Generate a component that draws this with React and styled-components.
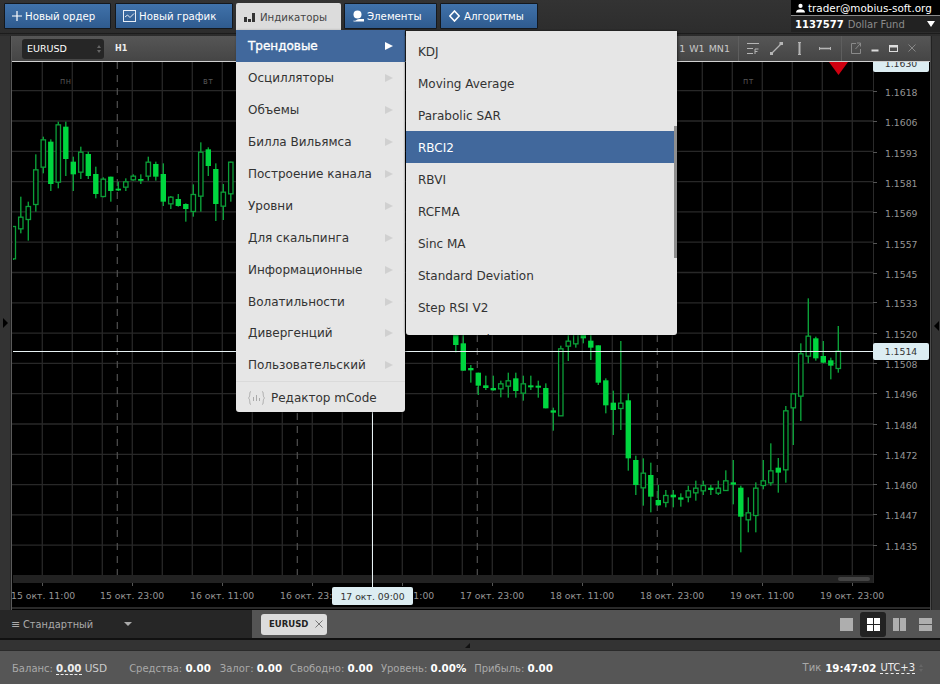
import React from 'react';
import styled, { createGlobalStyle } from 'styled-components';

const FONT = '"DejaVu Sans", Verdana, sans-serif';

const Global = createGlobalStyle`
  html, body { margin: 0; padding: 0; background: #2f2f2f; }
  * { box-sizing: border-box; }
`;

const Page = styled.div`
  width: 940px; height: 684px; overflow: hidden;
  display: flex; flex-direction: column;
  background: #2f2f2f; font-family: ${FONT};
`;

/* ---------- top bar ---------- */
const TopBar = styled.header`
  height: 36px; flex: none; display: flex; justify-content: space-between;
  padding: 3px 0 0 4px;
  background: linear-gradient(#333, #2c2c2c);
  position: relative;
  &::after { content: ''; position: absolute; left: 0; right: 0; top: 33px; height: 1px; background: #1c1c1c; }
`;
const Toolbar = styled.nav`
  display: flex; height: 26px; gap: 3px;
`;
const ToolButton = styled.div`
  position: relative; display: flex; align-items: center; gap: ${p => p.$gap}px;
  width: ${p => p.$w}px; height: 26px; padding-left: ${p => p.$pad}px;
  margin-right: ${p => p.$after || 0}px;
  border: 1px solid #14181d; border-radius: 1px;
  background: linear-gradient(#4072aa, #2f5b8f);
  color: #fff; font-size: 10.2px; white-space: nowrap;
`;
const ActiveButton = styled(ToolButton)`
  border: none; border-radius: 2px 2px 0 0; height: 28px;
  background: #dcdcdc; color: #444; z-index: 5;
`;
const UserBox = styled.div`
  width: 149px; height: 32px; margin-top: -3px; background: #222; flex: none;
  position: relative; z-index: 3; color: #fff;
`;
const UserMail = styled.div`
  height: 16px; background: #000; border-bottom: 1px solid #8a8a8a;
  display: flex; align-items: center; gap: 3px; padding-left: 5px;
  font-size: 10.4px; white-space: nowrap;
`;
const UserAccount = styled.div`
  height: 16px; display: flex; align-items: center; gap: 4px; padding: 0 5px 0 4px;
  font-size: 10px; white-space: nowrap;
`;
const AccountId = styled.span`font-weight: 600;`;
const AccountName = styled.span`color: #8b8b8b; flex: 1;`;
const Caret = styled.span`
  width: 0; height: 0; border-left: 4px solid transparent; border-right: 4px solid transparent;
  border-top: 6px solid #fff;
`;

/* ---------- dropdown ---------- */
const Menu = styled.div`
  position: absolute; left: 0; top: 27px; width: 169px; height: 382px;
  background: #e6e6e6; border-radius: 0 0 3px 3px;
  box-shadow: 1px 1px 3px rgba(0,0,0,.5);
  font-size: 12px; color: #333;
`;
const MenuItem = styled.div`
  height: 31.9px; display: flex; align-items: center; justify-content: space-between;
  padding: 1px 12px 0; white-space: nowrap;
  background: ${p => p.$on ? '#41689c' : 'transparent'};
  color: ${p => p.$on ? '#fff' : '#333'};
  ${p => p.$on && '-webkit-text-stroke: 0.35px #fff; padding-top: 0;'}
`;
const Arrow = styled.span`
  width: 0; height: 0; border-top: 4px solid transparent; border-bottom: 4px solid transparent;
  border-left: 8px solid ${p => p.$on ? '#fff' : '#d0d0d0'};
`;
const MenuFooter = styled.div`
  height: 32px; display: flex; align-items: center; gap: 6px; padding: 1px 0 0 12px;
  border-top: 1px solid #dadada; white-space: nowrap;
`;
const SubMenu = styled.div`
  position: absolute; left: 170px; top: 1px; width: 271px; height: 304px;
  overflow: hidden; background: #e6e6e6; border-radius: 0 0 3px 3px;
  box-shadow: -1px 0 2px rgba(0,0,0,.55), 1px 1px 3px rgba(0,0,0,.5);
  padding-top: 4px;
`;
const SubItem = styled.div`
  height: 32px; display: flex; align-items: center; padding: 2px 0 0 12px;
  background: ${p => p.$on ? '#41689c' : 'transparent'};
  color: ${p => p.$on ? '#fff' : '#333'};
`;
const SubScroll = styled.div`
  position: absolute; right: 0; top: 95px; width: 3px; height: 132px; background: #8e8e8e;
`;

/* ---------- workspace ---------- */
const Workspace = styled.main`
  flex: none; height: 574px; display: flex;
`;
const Rail = styled.div`
  width: ${p => p.$w}px; flex: none; background: #333;
  display: flex; align-items: center; justify-content: center; padding-top: ${p => p.$top}px;
  border-${p => p.$side}: 1px solid #222;
`;
const RailArrow = styled.span`
  width: 0; height: 0; border-top: 5px solid transparent; border-bottom: 5px solid transparent;
  ${p => p.$dir === 'r' ? 'border-left: 5px solid #000;' : 'border-right: 5px solid #000;'}
`;
const ChartWindow = styled.section`
  flex: 1; min-width: 0; display: flex; flex-direction: column;
  border-left: 1px solid #5a5a5a; border-right: 1px solid #4a4a4a; background: #000;
`;
const ChartHeader = styled.div`
  height: 26px; flex: none; display: flex; align-items: center;
  background: linear-gradient(#565656, #454545);
  border-bottom: 1px solid #d0d0d0;
  padding-left: 10px; color: #ddd; font-size: 10px;
`;
const SymbolSelect = styled.div`
  width: 82px; height: 20px; border-radius: 3px; background: #262626; color: #fff;
  display: flex; align-items: center; justify-content: space-between;
  padding: 0 3px 0 5px; font-size: 9.5px;
`;
const Spinner = styled.span`
  display: flex; flex-direction: column; gap: 2px;
  &::before, &::after { content: ''; width: 0; height: 0; border-left: 2.5px solid transparent; border-right: 2.5px solid transparent; }
  &::before { border-bottom: 3px solid #666; }
  &::after { border-top: 3px solid #666; }
`;
const Period = styled.span`margin-left: 11px; font-weight: 700; font-size: 8px; color: #eee;`;
const HeaderRight = styled.div`
  margin-left: auto; display: flex; align-items: center; height: 25px;
`;
const Periods = styled.span`
  display: flex; gap: 4px; font-size: 9.5px; color: #c8c8c8; padding-right: 8px;
`;
const IconGroup = styled.div`
  display: flex; align-items: center; height: 25px; gap: ${p => p.$gap}px;
  padding: 0 ${p => p.$pr}px 0 ${p => p.$pl}px;
  border-left: 1px solid #5e5e5e;
`;
const ChartBody = styled.div`
  flex: 1; position: relative; overflow: hidden;
`;
const ChartSvg = styled.svg`
  display: block; width: 919px; height: 547px;
`;
const PriceTag = styled.div`
  position: absolute; left: 861px; top: ${p => p.$top}px; width: 56px; height: 17px;
  background: #dcedf2; border-radius: 2px; color: #333; font-size: 9.3px;
  display: flex; align-items: center; justify-content: center;
`;
const TimeTag = styled.div`
  position: absolute; left: 320px; top: 525px; width: 81px; height: 18px;
  background: #dcedf2; border-radius: 2px; color: #333; font-size: 9.3px;
  display: flex; align-items: center; justify-content: center; white-space: nowrap;
`;

/* ---------- tabs ---------- */
const TabBar = styled.div`
  height: 30px; flex: none; display: flex; background: #545454; border-bottom: 2px solid #111;
`;
const LayoutPicker = styled.div`
  width: 252px; flex: none; background: #262626; color: #aaa; font-size: 9.8px;
  display: flex; align-items: center; padding-left: 11px; gap: 4px;
`;
const PickerName = styled.span`width: 97px;`;
const PickerMark = styled.span`font-size: 11px; width: 8px;`;
const DownCaret = styled(Caret)`border-top-color: #aaa; border-top-width: 4px;`;
const TabStrip = styled.div`
  flex: 1; display: flex; align-items: center; padding-left: 9px;
`;
const Tab = styled.div`
  width: 66px; height: 21px; border-radius: 3px; background: #dcdcdc; color: #222;
  display: flex; align-items: center; gap: 7px; padding-left: 8px;
  font-size: 8.5px; font-weight: 700;
`;
const ViewButtons = styled.div`
  display: flex; align-items: center; padding-right: 1px;
`;
const ViewButton = styled.div`
  width: 26.4px; height: 25px; border-radius: 3px;
  display: flex; align-items: center; justify-content: center;
  background: ${p => p.$on ? '#222' : 'transparent'};
`;

const Strip = styled.div`
  height: 10px; flex: none; background: #333; position: relative;
  &::after { content: ''; position: absolute; left: 465px; top: 3px; border-left: 5px solid transparent; border-bottom: 5px solid #111; }
`;

/* ---------- status ---------- */
const StatusBar = styled.footer`
  flex: 1; background: #565656; border-top: 1px solid #2a2a2a;
  display: flex; align-items: center; padding-left: 12px;
  color: #a9a9a9; font-size: 10px; white-space: nowrap;
`;
const Stat = styled.span`margin-right: ${p => p.$mr}px;`;
const Val = styled.b`color: #fff; font-weight: 700; font-size: 10.3px;`;
const Dashed = styled.span`border-bottom: 1px dashed #eee; color: #eee; font-weight: ${p => p.$b ? 700 : 400}; font-size: ${p => p.$b ? 10.3 : 10}px;`;
const Unit = styled.span`color: #ccc; font-size: 10.5px;`;
const StatusRight = styled.div`
  margin-left: auto; display: flex; align-items: center; gap: 4px; padding-right: 17px; font-size: 10px;
`;

/* ---------- chart data: [index, wickTop, bodyTop, bodyBottom, wickBottom, filled] in 3x crop px ---------- */
const A = [
  [0,498,498,595,600,0],[1,410,470,505,520,0],[2,425,438,477,542,0],[3,283,328,432,455,0],[4,230,238,320,340,0],
  [5,238,245,372,393,1],[6,185,193,365,385,0],[7,185,200,297,348,1],[8,290,305,343,393,1],[9,260,275,335,357,0],
  [10,275,282,348,357,1],[11,320,342,402,415,1],[12,352,356,408,412,0],[13,350,350,393,425,1],[14,365,386,390,393,1],
  [15,355,364,380,393,0],[16,343,347,358,362,0],[17,343,357,360,372,1],[18,290,305,347,362,0],[19,305,312,350,362,1],
  [20,310,342,425,438,1],[21,408,410,430,447,0],[22,402,417,438,440,1],[23,430,432,447,485,1],[24,373,402,453,470,0],
  [25,247,275,407,455,0],[26,262,268,318,348,1],[27,310,327,432,483,1],[28,372,395,437,480,0],[29,305,305,400,425,0],
];
const B = [
  [59,0,0,45,67,1],[60,0,40,122,122,1],[61,105,114,121,158,1],[62,128,128,167,195,1],[63,137,166,174,180,1],
  [64,137,174,181,182,1],[65,152,160,175,202,0],[66,128,151,167,203,0],[67,128,145,183,203,1],[68,137,160,188,212,0],
  [69,137,166,172,180,1],[70,152,167,173,203,1],[71,160,174,235,235,1],[72,233,241,248,302,1],[73,47,55,256,257,0],
  [74,0,32,47,93,0],[75,0,0,40,53,0],[76,0,0,25,40,1],[77,0,32,53,90,1],[78,46,46,158,165,1],
  [79,145,151,226,250,1],[80,182,218,240,315,1],[81,33,218,234,300,0],[82,190,211,385,422,1],[83,377,390,465,495,1],
  [84,385,428,472,527,0],[85,398,435,500,547,1],[86,465,510,526,527,1],[87,480,495,516,532,0],[88,480,494,502,532,1],
];
const C = [
  [89,640,652,659,680,1],[90,617,631,650,667,0],[91,602,623,637,662,0],[92,602,615,631,645,0],[93,615,623,630,645,1],
  [94,602,623,638,645,0],[95,571,601,630,632,0],[96,540,607,614,673,1],[97,617,623,710,817,1],[98,652,697,718,757,0],
  [99,607,623,705,757,0],[100,540,601,615,628,0],[101,490,571,607,617,0],[102,534,563,578,638,1],[103,378,391,568,608,0],
  [104,340,340,382,495,0],[105,190,220,347,423,0],[106,55,167,227,250,0],[107,170,175,235,242,1],[108,183,228,248,250,1],
  [109,233,241,257,298,1],[110,138,212,264,278,0],
];
const toReal = (rows, y0) => rows.map(([i, a, b, c, d, f]) => ({ i, wt: y0 + a / 3, bt: y0 + b / 3, bb: y0 + c / 3, wb: y0 + d / 3, f }));
const CANDLES = [...toReal(A, 60), ...toReal(B, 330), ...toReal(C, 280)];

const PRICES = [['1.1618',92],['1.1606',122.7],['1.1593',153],['1.1581',183],['1.1569',213],['1.1557',244],['1.1545',274],['1.1533',303.5],['1.1520',334],['1.1508',364],['1.1496',394],['1.1484',425],['1.1472',455],['1.1460',485],['1.1447',515],['1.1435',546]];
const TIMES = [['15 окт. 11:00',11],['15 окт. 23:00',100],['16 окт. 11:00',190],['16 окт. 23:00',280],['17 окт. 11:00',370],['17 окт. 23:00',460],['18 окт. 11:00',550],['18 окт. 23:00',640],['19 окт. 11:00',730],['19 окт. 23:00',820]];
const VX = Array.from({ length: 28 }, (_, n) => 42 + 30 * n);
const HY = Array.from({ length: 16 }, (_, n) => 90.7 + 30.3 * n);
const DASHED = [117, 297, 477, 657];

const Chart = () => (
  <ChartSvg viewBox="12 62 919 547">
    <defs><clipPath id="plot"><rect x="13" y="62" width="860" height="513" /></clipPath></defs>
    <g stroke="#282828" strokeWidth="1.3">
      {VX.map(x => <line key={x} x1={x + .3} x2={x + .3} y1="62" y2="575" />)}
      {HY.map(y => <line key={y} x1="12" x2="873" y1={y} y2={y} />)}
    </g>
    <g stroke="#505050" strokeWidth="1.2" strokeDasharray="7 6">
      {DASHED.map(x => <line key={x} x1={x + .3} x2={x + .3} y1="62" y2="575" />)}
    </g>
    <g fontFamily={FONT} fontSize="8" fill="#555" letterSpacing=".5">
      <text x="60" y="84">пн</text><text x="203" y="84">вт</text><text x="743" y="84">пт</text>
    </g>
    <g clipPath="url(#plot)">
      {CANDLES.map(c => {
        const x = 13.3 + 7.5 * c.i;
        return (
          <g key={c.i}>
            <rect x={x - .7} y={c.wt} width="1.4" height={c.wb - c.wt} fill="#0b9f38" />
            {c.f
              ? <rect x={x - 2.7} y={c.bt} width="5.4" height={Math.max(c.bb - c.bt, 1.8)} fill="#00d63f" />
              : <rect x={x - 2.2} y={c.bt + .5} width="4.4" height={c.bb - c.bt} fill="#000" stroke="#0b9f38" strokeWidth="1.3" />}
          </g>
        );
      })}
    </g>
    <rect x="13" y="575" width="860" height="8" fill="#222" />
    <rect x="838" y="577" width="32" height="4" rx="2" fill="#444" />
    <line x1="873.5" x2="873.5" y1="62" y2="583" stroke="#2a2a2a" />
    <polygon points="829,62 848,62 838.5,75" fill="#cf0010" />
    <line x1="13" x2="873" y1="351.5" y2="351.5" stroke="#e8f2f4" />
    <line x1="372.5" x2="372.5" y1="62" y2="590" stroke="#e8f2f4" />
    <g stroke="#555">
      {PRICES.map(([, y]) => <line key={y} x1="873" x2="877" y1={Math.round(y - 1.5) + .5} y2={Math.round(y - 1.5) + .5} />)}
      {[42, 132, 222, 312, 402, 492, 582, 672, 762, 852].map(x => <line key={x} x1={x + .5} x2={x + .5} y1="583" y2="586" />)}
    </g>
    <g fontFamily={FONT} fontSize="9.3" fill="#959595">
      {PRICES.map(([p, y]) => <text key={p} x="885" y={y + 3.5}>{p}</text>)}
    </g>
    <g fontFamily={FONT} fontSize="9.3" fill="#959595">
      {TIMES.map(([t, x]) => <text key={t} x={x} y="599">{t}</text>)}
    </g>
    <line x1="12" x2="931" y1="608" y2="608" stroke="#555" />
  </ChartSvg>
);

/* ---------- icons ---------- */
const PlusIcon = () => <svg width="10" height="10" viewBox="0 0 10 10"><path d="M5 0v10M0 5h10" stroke="#fff" strokeWidth="1.2" /></svg>;
const GraphIcon = () => <svg width="13" height="12" viewBox="0 0 13 12" fill="none" stroke="#e8eef6"><rect x=".5" y=".5" width="12" height="11" /><path d="M2 7l2.500-2 2.500 2.500L11 3.500" /></svg>;
const BarsIcon = () => <svg width="11" height="9" viewBox="0 0 11 9" fill="#333"><rect y="4" width="3" height="5" /><rect x="4" y="6" width="3" height="3" /><rect x="8" width="3" height="9" /></svg>;
const ElementsIcon = () => <svg width="11" height="12" viewBox="0 0 11 12" fill="#fff"><circle cx="4.500" cy="4.500" r="4" /><path d="M.5 10.500c3 1 3-1.500 6-1.500H11v2.500H.5z" /></svg>;
const DiamondIcon = () => <svg width="11" height="12" viewBox="0 0 11 12" fill="none" stroke="#fff" strokeWidth="1.6"><path d="M5.500 1l4.700 5-4.700 5-4.700-5z" /></svg>;
const UserIcon = () => <svg width="9" height="10" viewBox="0 0 11 11" fill="#fff"><circle cx="5.500" cy="3" r="2.600" /><path d="M0 11c0-3 2.500-4 5.500-4S11 8 11 11z" /></svg>;
const CodeIcon = () => <svg width="17" height="14" viewBox="0 0 17 14" fill="none" stroke="#aaa"><path d="M3 .5C1 .5 2.500 6 .5 7c2 1 .5 6.500 2.500 6.500M14 .5c2 0 .5 5.500 2.500 6.500-2 1-.5 6.500-2.500 6.500" /><path d="M5.500 6v4M8.500 4v6M11.500 7v3" /></svg>;
const HeaderIcon = ({ w = 13, children }) => <svg width={w} height="13" viewBox={`0 0 ${w} 13`} fill="none" stroke="#b5b5b5">{children}</svg>;
const CloseGlyph = ({ c = '#999', s = 8 }) => <svg width={s} height={s} viewBox="0 0 8 8" fill="none" stroke={c}><path d="M.5.5l7 7M7.500.5l-7 7" /></svg>;
const ViewIcon = ({ kind, on }) => {
  const f = on ? '#fff' : '#aeaeae';
  const rects = { one: [[0, 0, 13, 13]], four: [[0, 0, 6, 6], [7, 0, 6, 6], [0, 7, 6, 6], [7, 7, 6, 6]], cols: [[0, 0, 6, 13], [7, 0, 6, 13]], rows: [[0, 0, 13, 6], [0, 7, 13, 6]] }[kind];
  return <svg width="13" height="13" viewBox="0 0 13 13" fill={f}>{rects.map(r => <rect key={r.join()} x={r[0]} y={r[1]} width={r[2]} height={r[3]} />)}</svg>;
};

const GROUPS = ['Осцилляторы', 'Объемы', 'Билла Вильямса', 'Построение канала', 'Уровни', 'Для скальпинга', 'Информационные', 'Волатильности', 'Дивергенций', 'Пользовательский'];
const SUB = ['KDJ', 'Moving Average', 'Parabolic SAR', 'RBCI2', 'RBVI', 'RCFMA', 'Sinc MA', 'Standard Deviation', 'Step RSI V2', 'Super Trend'];

export default function App() {
  return (
    <Page>
      <Global />
      <TopBar>
        <Toolbar>
          <ToolButton $w={107} $pad={7} $gap={3} $after={1}><PlusIcon /> Новый ордер</ToolButton>
          <ToolButton $w={118} $pad={7} $gap={3}><GraphIcon /> Новый график</ToolButton>
          <ActiveButton $w={105} $pad={8} $gap={5}>
            <BarsIcon /> Индикаторы
            <Menu>
              <MenuItem $on>Трендовые<Arrow $on /></MenuItem>
              {GROUPS.map(g => <MenuItem key={g}>{g}<Arrow /></MenuItem>)}
              <MenuFooter><CodeIcon /> Редактор mCode</MenuFooter>
              <SubMenu>
                {SUB.map(s => <SubItem key={s} $on={s === 'RBCI2'}>{s}</SubItem>)}
                <SubScroll />
              </SubMenu>
            </Menu>
          </ActiveButton>
          <ToolButton $w={93} $pad={8} $gap={3}><ElementsIcon /> Элементы</ToolButton>
          <ToolButton $w={98} $pad={8} $gap={4}><DiamondIcon /> Алгоритмы</ToolButton>
        </Toolbar>
        <UserBox>
          <UserMail><UserIcon /> trader@mobius-soft.org</UserMail>
          <UserAccount><AccountId>1137577</AccountId><AccountName>Dollar Fund</AccountName><Caret /></UserAccount>
        </UserBox>
      </TopBar>
      <Workspace>
        <Rail $w={11} $top={0} $side="right"><RailArrow $dir="r" /></Rail>
        <ChartWindow>
          <ChartHeader>
            <SymbolSelect>EURUSD<Spinner /></SymbolSelect>
            <Period>H1</Period>
            <HeaderRight>
              <Periods><span>1</span><span>W1</span><span>MN1</span></Periods>
              <IconGroup $gap={11} $pl={7} $pr={10}>
                <HeaderIcon><path d="M1 1.500h12M1 6.500h6M1 11.500h6M9 12V7h3.500M9 9.500h2.500" /></HeaderIcon>
                <HeaderIcon><path d="M2 11L11 2" strokeWidth="1.300" /><rect x="10" y="0" width="2.500" height="2.500" fill="#b5b5b5" /><rect x="0" y="10.500" width="2.500" height="2.500" fill="#b5b5b5" /></HeaderIcon>
                <HeaderIcon w={11}><path d="M5.500 1v11" strokeWidth="2" /><path d="M4 .500h3M4 12.500h3" /></HeaderIcon>
                <HeaderIcon w={15}><path d="M4 6.500h10" strokeWidth="1.600" /><path d="M3.500 5v3M14.500 5v3" /></HeaderIcon>
              </IconGroup>
              <IconGroup $gap={10} $pl={9} $pr={14}>
                <HeaderIcon w={10}><path d="M5 1.500H.5v10h9V7M4.500 7L9 2M6 1h3.500v3.500" stroke="#8a8a8a" /></HeaderIcon>
                <HeaderIcon w={8}><path d="M.5 8.500h7" strokeWidth="2" stroke="#ddd" /></HeaderIcon>
                <HeaderIcon w={9}><rect x=".5" y="3.500" width="8" height="6" stroke="#ddd" /><path d="M0 4.500h9" stroke="#ddd" strokeWidth="2" /></HeaderIcon>
                <HeaderIcon w={8}><path d="M.5 2.500l7 7M7.500 2.500l-7 7" stroke="#888" /></HeaderIcon>
              </IconGroup>
            </HeaderRight>
          </ChartHeader>
          <ChartBody>
            <Chart />
            <PriceTag $top={-7}>1.1630</PriceTag>
            <PriceTag $top={281}>1.1514</PriceTag>
            <TimeTag>17 окт. 09:00</TimeTag>
          </ChartBody>
        </ChartWindow>
        <Rail $w={9} $top={6} $side="left"><RailArrow $dir="l" /></Rail>
      </Workspace>
      <TabBar>
        <LayoutPicker><PickerMark>≡</PickerMark><PickerName>Стандартный</PickerName><DownCaret /></LayoutPicker>
        <TabStrip><Tab>EURUSD <CloseGlyph c="#777" /></Tab></TabStrip>
        <ViewButtons>
          <ViewButton><ViewIcon kind="one" /></ViewButton>
          <ViewButton $on><ViewIcon kind="four" on /></ViewButton>
          <ViewButton><ViewIcon kind="cols" /></ViewButton>
          <ViewButton><ViewIcon kind="rows" /></ViewButton>
        </ViewButtons>
      </TabBar>
      <Strip />
      <StatusBar>
        <Stat $mr={22}>Баланс: <Dashed $b>0.00</Dashed> <Unit>USD</Unit></Stat>
        <Stat $mr={9}>Средства: <Val>0.00</Val></Stat>
        <Stat $mr={8}>Залог: <Val>0.00</Val></Stat>
        <Stat $mr={8}>Свободно: <Val>0.00</Val></Stat>
        <Stat $mr={8}>Уровень: <Val>0.00%</Val></Stat>
        <Stat $mr={0}>Прибыль: <Val>0.00</Val></Stat>
        <StatusRight>
          <span>Тик</span><Val>19:47:02</Val><Dashed>UTC+3</Dashed>
          <Spinner />
        </StatusRight>
      </StatusBar>
    </Page>
  );
}
